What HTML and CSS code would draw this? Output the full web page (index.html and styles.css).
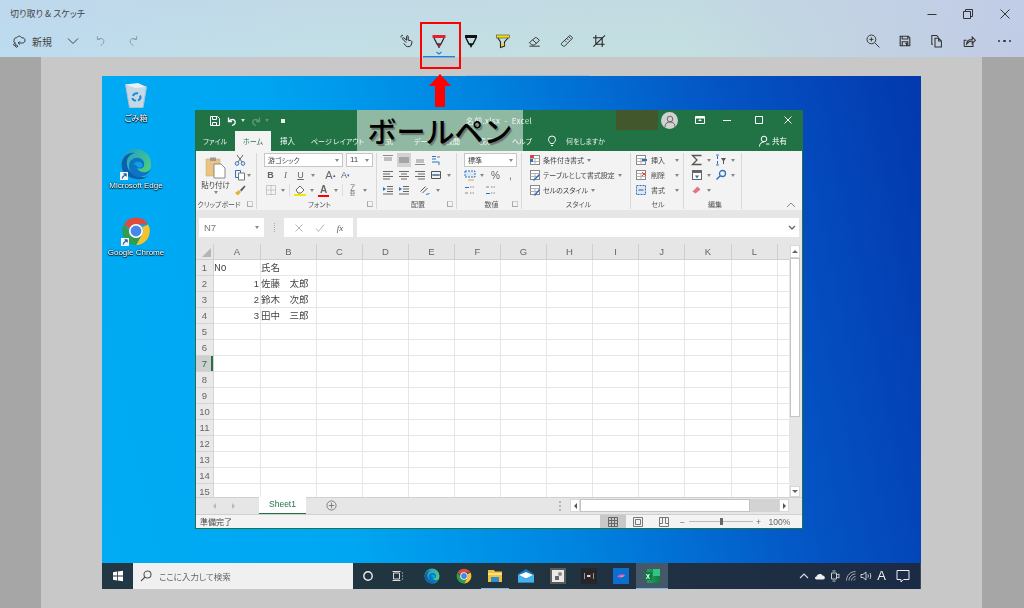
FILE: index.html
```html
<!DOCTYPE html>
<html lang="ja">
<head>
<meta charset="utf-8">
<title>切り取り &amp; スケッチ</title>
<link rel="stylesheet" href="styles.css">
</head>
<body>
<svg class="defs" aria-hidden="true">
  <defs>
    <linearGradient id="edge-g" x1="0" y1="0" x2="1" y2="1"><stop offset="0" stop-color="#1a9bd0"/><stop offset="1" stop-color="#5ad76e"/></linearGradient>
    <linearGradient id="xl-g" x1="0" y1="0" x2="1" y2="0"><stop offset="0" stop-color="#21a366"/><stop offset="1" stop-color="#107c41"/></linearGradient>
    <symbol id="edge" viewBox="0 0 32 32">
      <circle cx="16" cy="16" r="15" fill="url(#edge-g)"/>
      <path d="M1.5 17C2 8 9 4 15 5c-6 1-9 6-8 12 1 7 8 12 16 12 2 0 4-.5 5-1-3 2.500-7 4-12 3C8 30 1.500 25 1.500 17Z" fill="#0a5fb0"/>
      <path d="M9 18c0-6 5-9 10-8 4 1 6 4 5 8-1 3-5 3-7 2 1 3 5 5 9 4 2-.5 4-2 5-3-2 5-7 8-12 8-6 0-10-5-10-11Z" fill="#0c74c4"/>
      <path d="M13 17c1-3 4-4 7-3 3 1 3 4 2 5-2 1-5 .5-5-1-1-1.500-3-2-4-1Z" fill="#0ea1e4"/>
    </symbol>
    <symbol id="chrome" viewBox="0 0 32 32">
      <path d="M3 9A15 15 0 0 1 29 9H16a7 7 0 0 0-6.500 4.500Z" fill="#dd4b3e"/>
      <path d="M29 9A15 15 0 0 1 16 31l6.500-11.500A7 7 0 0 0 22.500 12Z" fill="#f6c22c"/>
      <path d="M3 9a15 15 0 0 0 13 22l6.500-11.500a7 7 0 0 1-12.500-2.500Z" fill="#2f9e4f"/>
      <circle cx="16" cy="16" r="7.500" fill="#fff"/>
      <circle cx="16" cy="16" r="5.800" fill="#4a86e8"/>
    </symbol>
    <symbol id="shortcut" viewBox="0 0 9 9">
      <rect width="9" height="9" fill="#f4f4f4"/>
      <path d="M2.500 7.500C2.500 5 3.500 4 5.500 4M4.200 2H7v2.800Z" fill="#1a5fb4" stroke="#1a5fb4"/>
    </symbol>
    <symbol id="lines-l" viewBox="0 0 12 12"><path d="M1 2.500h10M1 5h7M1 7.500h10M1 10h7" stroke="#6a6a6a" fill="none"/></symbol>
    <symbol id="lines-c" viewBox="0 0 12 12"><path d="M1 2.500h10M3 5h6M1 7.500h10M3 10h6" stroke="#6a6a6a" fill="none"/></symbol>
    <symbol id="lines-r" viewBox="0 0 12 12"><path d="M1 2.500h10M4 5h7M1 7.500h10M4 10h7" stroke="#6a6a6a" fill="none"/></symbol>
    <symbol id="lines-t" viewBox="0 0 12 12"><path d="M1 1.500h10M2 4h8M2 6h8" stroke="#8a8a8a" fill="none"/></symbol>
    <symbol id="lines-m" viewBox="0 0 12 12"><path d="M1 4h10M1 6h10M1 8h10" stroke="#777" fill="none"/></symbol>
    <symbol id="lines-b" viewBox="0 0 12 12"><path d="M2 6h8M2 8h8M1 10.500h10" stroke="#8a8a8a" fill="none"/></symbol>
    <symbol id="table-mini" viewBox="0 0 12 12"><rect x="1.500" y="1.500" width="9" height="9" fill="#fff" stroke="#888"/><path d="M1.500 4.500h9M1.500 7.500h9M6 4.500v6" stroke="#b2b2b2" fill="none"/></symbol>
  </defs>
</svg>

<div class="app">
  <header class="head">
    <div class="titlebar">
      <span class="apptitle">切り取り &amp; スケッチ</span>
      <div class="winctl">
        <button class="wbtn"><svg class="i12" viewBox="0 0 12 12"><path d="M1.500 6.500h9" stroke="#333" fill="none"/></svg></button>
        <button class="wbtn"><svg class="i12" viewBox="0 0 12 12"><path d="M1.500 3.500h7v7h-7zM3.500 3.500v-2h7v7h-2" stroke="#333" fill="none"/></svg></button>
        <button class="wbtn"><svg class="i12" viewBox="0 0 12 12"><path d="M1.500 1.500l9 9M10.500 1.500l-9 9" stroke="#333" fill="none"/></svg></button>
      </div>
    </div>
    <div class="toolbar">
      <div class="tb-left">
        <svg class="i16" viewBox="0 0 20 20" fill="none" stroke="#333" stroke-width="1.200"><path d="M6 12.500C3.500 12.500 3 10 4 9c-.5-2 1.500-3.500 3-3C8 3.500 12 3 13.500 6c2.500-.5 4.500 1.500 4 4-.5 2-2 2.500-3.500 2.500H9l2-2M9 12.500l2 2"/><circle cx="4.500" cy="14.500" r="1.300"/><circle cx="7" cy="16.500" r="1.300"/></svg>
        <span class="newlabel">新規</span>
        <svg class="i12 chev" viewBox="0 0 12 12" fill="none" stroke="#444"><path d="M1 3.500l5 5 5-5"/></svg>
        <svg class="i16 undo" viewBox="0 0 20 20" fill="none" stroke="#8b9aa3" stroke-width="1.200"><path d="M9.500 15.500c3-1.500 4.500-3.500 4-6-.5-2-3-3-5-2.500L5.500 8M5.500 4v4H9"/></svg>
        <svg class="i16 redo" viewBox="0 0 20 20" fill="none" stroke="#8b9aa3" stroke-width="1.200"><path d="M10.500 15.500c-3-1.500-4.500-3.500-4-6 .5-2 3-3 5-2.500l3 1M14.500 4v4H11"/></svg>
      </div>
      <div class="tb-center">
        <div class="tool"><svg class="i16" viewBox="0 0 20 20" fill="none" stroke="#222" stroke-width="1.200"><path d="M9 12L4.500 7.500c-1-1 .5-2 1.500-1.500l3.500 3V4.500c0-1.500 2-1.500 2 0V9l3 .5c1.500.5 2 1.500 1.500 3l-1 3c-.5 1-1 1.500-2.500 1.500h-2c-1 0-2-.5-2.500-1.500L6 13"/><path d="M2.500 5.500c-.5-1.500 1-3 2.500-2.500"/></svg></div>
        <div class="tool tool-pen"><svg class="pen" viewBox="0 0 32 30" fill="none"><rect x="9.500" y="8" width="13" height="3" fill="#e8202a"/><path d="M11 11l3 6h4l3-6" stroke="#222" stroke-width="1.200"/><path d="M14 17l2 4 2-4z" fill="#d71920" stroke="#222" stroke-width=".6"/><path d="M13.500 25l2.500 2 2.500-2" stroke="#1f82e0" stroke-width="1.200"/><rect y="29" width="32" height="1.400" fill="#1f82e0"/></svg></div>
        <div class="tool"><svg class="i20" viewBox="0 0 20 20" fill="none"><rect x="4" y="4" width="12" height="3" fill="#111"/><path d="M5 7l3 6h4l3-6" stroke="#111" stroke-width="1.400"/><path d="M8 13l2 4 2-4z" fill="#111"/></svg></div>
        <div class="tool"><svg class="i20" viewBox="0 0 20 20" fill="none"><rect x="3.500" y="4" width="13" height="3" fill="#f5d90a" stroke="#333" stroke-width=".5"/><path d="M5 7l2.500 4v5.500l4-1.500v-4L15 7" stroke="#222" stroke-width="1.100"/><path d="M8.200 12.500h3v2l-3 1z" fill="#f5d90a"/></svg></div>
        <div class="tool"><svg class="i16" viewBox="0 0 20 20" fill="none" stroke="#333" stroke-width="1.200"><path d="M3 12l7-6c.8-.6 1.500-.6 2 0l3 2.500c.5.5.5 1 0 1.500l-6 5H6zM7 8.500l5 4.500M3 16.500h13"/></svg></div>
        <div class="tool"><svg class="i16" viewBox="0 0 20 20" fill="none" stroke="#333" stroke-width="1.200"><path d="M3 13L13 3.500c.5-.5 1-.5 1.500 0l2 2c.5.5.5 1 0 1.500L7 16.500c-.5.5-1 .5-1.500 0L3 14.500c-.4-.5-.4-1 0-1.500zM7.500 9.500l2 2M10 7l2 2M12.500 5l2 2"/></svg></div>
        <div class="tool"><svg class="i16" viewBox="0 0 20 20" fill="none" stroke="#222" stroke-width="1.300"><path d="M6 2.500V14h11M2.500 6H14v11.500M3 17L17.500 3"/></svg></div>
      </div>
      <div class="tb-right">
        <div class="tool"><svg class="i16" viewBox="0 0 20 20" fill="none" stroke="#333" stroke-width="1.200"><circle cx="8" cy="8" r="5.500"/><path d="M12 12l6 6M5.500 8h5M8 5.500v5"/></svg></div>
        <div class="tool"><svg class="i16" viewBox="0 0 20 20" fill="none" stroke="#333" stroke-width="1.400"><path d="M4 4h10l2 2v10H4zM6.500 4v3.500h7V4M6.500 16v-5h7v5M10.500 13h1.500v3"/></svg></div>
        <div class="tool"><svg class="i16" viewBox="0 0 20 20" fill="none" stroke="#333" stroke-width="1.300"><path d="M5 14H3.500V3h6L12 5.500M7.500 6.500H12l3.500 3.500v7.500h-8zM12 6.500V10h3.500"/></svg></div>
        <div class="tool"><svg class="i16" viewBox="0 0 20 20" fill="none" stroke="#333" stroke-width="1.300"><path d="M4 17h11v-4M4 17V9h3M7 14c0-3.500 2.500-6 7-6V5l4 4-4 4v-3c-3 0-5 1-7 4z"/></svg></div>
        <div class="tool more"><span class="dot"></span><span class="dot"></span><span class="dot"></span></div>
      </div>
    </div>
  </header>

  <main class="canvas">
    <div class="stage">
      <section class="desktop">
        <div class="desk-area">
          <div class="desk-icons">
            <div class="dicon dicon-bin">
              <svg class="i26" viewBox="0 0 26 26"><path d="M2.500 2.500L23.500 5 20 25.500H6.500Z" fill="#c4d8e6" stroke="#a9c3d6"/><path d="M2.500 2.500L15 1l8.500 4L12 6Z" fill="#e6f1f8"/><path d="M10 14c.5-2 3-3.500 5-2.500M17 13.500c1 2 0 4-2 5M13 18.500c-2 .5-3.500-1-3.500-2.500" fill="none" stroke="#1a88d8" stroke-width="2"/></svg>
              <span class="dlabel">ごみ箱</span>
            </div>
            <div class="dicon dicon-edge">
              <span class="dglyph"><svg class="i32" viewBox="0 0 32 32"><use href="#edge"/></svg><svg class="short" viewBox="0 0 9 9"><use href="#shortcut"/></svg></span>
              <span class="dlabel">Microsoft Edge</span>
            </div>
            <div class="dicon dicon-chrome">
              <span class="dglyph"><svg class="i30" viewBox="0 0 32 32"><use href="#chrome"/></svg><svg class="short" viewBox="0 0 9 9"><use href="#shortcut"/></svg></span>
              <span class="dlabel">Google Chrome</span>
            </div>
          </div>

          <article class="excel">
            <div class="xl-title">
              <div class="qat">
                <svg class="i12" viewBox="0 0 12 12" fill="none" stroke="#fff"><path d="M1.500 1.500h7l2 2v7h-9zM3.500 1.500v3h4v-3M3.500 10.500v-3h4v3"/></svg>
                <svg class="i12 q-undo" viewBox="0 0 12 12" fill="none" stroke="#fff" stroke-width="1.300"><path d="M6 10.500c3-1 3.500-3 3-4.500C8 4 5 4 3 6M2.500 2.500V6.500H6"/></svg>
                <span class="dd dd-w"></span>
                <svg class="i12 q-redo" viewBox="0 0 12 12" fill="none" stroke="#5c9a77" stroke-width="1.300"><path d="M6 10.500c-3-1-3.500-3-3-4.500C4 4 7 4 9 6M9.500 2.500V6.500H6"/></svg>
                <span class="dd dd-dim"></span>
                <span class="q-more"></span>
              </div>
              <span class="xl-name">名前.xlsx  -  Excel</span>
              <span class="redact"></span>
              <span class="avatar"><svg class="i12" viewBox="0 0 12 12" fill="none" stroke="#666"><circle cx="6" cy="4" r="2.800"/><path d="M1 12c0-3.500 2-5 5-5s5 1.500 5 5"/></svg></span>
              <div class="xl-ctl">
                <svg class="i12" viewBox="0 0 12 12"><path d="M1.500 2.500h9v7h-9z" fill="none" stroke="#fff"/><path d="M1.500 2.500h9v2h-9zM6 5l2 2H4z" fill="#fff"/></svg>
                <svg class="i12" viewBox="0 0 12 12"><path d="M2 6.500h8" stroke="#fff"/></svg>
                <svg class="i12" viewBox="0 0 12 12"><path d="M2.500 2.500h7v7h-7z" fill="none" stroke="#fff"/></svg>
                <svg class="i12" viewBox="0 0 12 12"><path d="M2.500 2.500l7 7M9.500 2.500l-7 7" stroke="#fff"/></svg>
              </div>
            </div>
            <nav class="xl-tabs">
              <span class="tab t-file">ファイル</span>
              <span class="tab t-home">ホーム</span>
              <span class="tab t-ins">挿入</span>
              <span class="tab t-page">ページ レイアウト</span>
              <span class="tab t-form">数式</span>
              <span class="tab t-data">データ</span>
              <span class="tab t-rev">校閲</span>
              <span class="tab t-view">表示</span>
              <span class="tab t-help">ヘルプ</span>
              <svg class="i12 bulb" viewBox="0 0 12 12" fill="none" stroke="#fff"><path d="M4.500 8.500C4 7 2.500 6.500 2.500 4.500a3.500 3.500 0 0 1 7 0c0 2-1.500 2.500-2 4zM5 10.500h2"/></svg>
              <span class="tab t-tell">何をしますか</span>
              <span class="share"><svg class="i12" viewBox="0 0 12 12" fill="none" stroke="#fff"><circle cx="6" cy="4" r="2.800"/><path d="M1.500 11.500c0-3 2-4.500 4.500-4.500M8 9h3.500"/></svg>共有</span>
            </nav>
            <div class="ribbon">
              <div class="group g-clip">
                <div class="clip-body">
                  <div class="paste">
                    <svg class="i22" viewBox="0 0 22 24"><path d="M1 4h14v17H1z" fill="#e9c483" stroke="#c9a566" stroke-width=".5"/><path d="M5 2.500h6V6H5z" fill="#9a9a9a"/><path d="M9 9h7l4 4v10H9z" fill="#fff" stroke="#8a8a8a"/></svg>
                    <span class="paste-t">貼り付け</span>
                    <span class="dd"></span>
                  </div>
                  <div class="clip-side">
                    <div class="row"><span class="ic"><svg class="i12" viewBox="0 0 12 12" fill="none"><path d="M3 1l5 7M9 1L4 8" stroke="#666"/><circle cx="3" cy="9.500" r="1.800" stroke="#2b72c4"/><circle cx="9" cy="9.500" r="1.800" stroke="#2b72c4"/></svg></span></div>
                    <div class="row"><span class="ic"><svg class="i12" viewBox="0 0 12 12" fill="none" stroke="#2b72c4"><path d="M1.500 1.500h5v7h-5z"/><path d="M4.500 4h6v7h-6z" fill="#fff" stroke="#777"/></svg></span><span class="dd"></span></div>
                    <div class="row"><span class="ic"><svg class="i12" viewBox="0 0 12 12"><path d="M1 9l4-3 2 2-3 3.500z" fill="#e3b23c"/><path d="M6 6l4.500-4.500 1 1L7.500 7.500z" fill="#555"/></svg></span></div>
                  </div>
                </div>
                <div class="glabel">クリップボード<span class="launch"></span></div>
              </div>

              <div class="group g-font">
                <div class="grows">
                  <div class="row combos"><span class="combo c-font">游ゴシック<span class="dd"></span></span><span class="combo c-size">11<span class="dd"></span></span></div>
                  <div class="row">
                    <span class="ic ltr b">B</span><span class="ic ltr it">I</span><span class="ic ltr un">U</span><span class="dd cell"></span>
                    <span class="ic ltr big sp6">A<sup>▴</sup></span><span class="ic ltr small">A<sup>▾</sup></span>
                  </div>
                  <div class="row">
                    <span class="ic"><svg class="i12" viewBox="0 0 12 12"><path d="M1.500 1.500h9v9h-9zM6 1.500v9M1.500 6h9" fill="none" stroke="#a0a0a0" stroke-dasharray="1 1"/></svg></span><span class="dd cell"></span><span class="vsep"></span>
                    <span class="ic"><svg class="i12" viewBox="0 0 12 12"><path d="M2 6l4-4 4 4-3 3H4z" fill="#fff" stroke="#666"/><rect y="10" width="12" height="2" fill="#f5e500"/></svg></span><span class="dd cell"></span>
                    <span class="ic ltr color">A<i class="bar"></i></span><span class="dd cell"></span><span class="vsep"></span>
                    <span class="ic ltr furi">ア<br>亜</span><span class="dd cell"></span>
                  </div>
                </div>
                <div class="glabel">フォント<span class="launch"></span></div>
              </div>

              <div class="group g-align">
                <div class="grows">
                  <div class="row">
                    <span class="ic w16"><svg class="i12" viewBox="0 0 12 12"><use href="#lines-t"/></svg></span>
                    <span class="ic w16 sel"><svg class="i12" viewBox="0 0 12 12"><use href="#lines-m"/></svg></span>
                    <span class="ic w16"><svg class="i12" viewBox="0 0 12 12"><use href="#lines-b"/></svg></span>
                    <span class="ic w16"><svg class="i12" viewBox="0 0 12 12" fill="none"><path d="M2 2.500h4M2 5h4M2 8h7v3" stroke="#2b72c4"/><path d="M7 3h3" stroke="#777"/></svg></span>
                  </div>
                  <div class="row">
                    <span class="ic w16"><svg class="i12" viewBox="0 0 12 12"><use href="#lines-l"/></svg></span>
                    <span class="ic w16"><svg class="i12" viewBox="0 0 12 12"><use href="#lines-c"/></svg></span>
                    <span class="ic w16"><svg class="i12" viewBox="0 0 12 12"><use href="#lines-r"/></svg></span>
                    <span class="ic w16"><svg class="i12" viewBox="0 0 12 12"><path d="M1.500 2.500h9v7h-9zM1.500 6h9" fill="none" stroke="#555"/><path d="M3 6h6" stroke="#2b72c4"/></svg></span><span class="dd cell"></span>
                  </div>
                  <div class="row">
                    <span class="ic w16"><svg class="i12" viewBox="0 0 12 12"><path d="M5 2.500h6M5 5h6M5 7.500h6M1 10h10" stroke="#666" fill="none"/><path d="M4 5L1 3v4z" fill="#2b72c4"/></svg></span>
                    <span class="ic w16"><svg class="i12" viewBox="0 0 12 12"><path d="M5 2.500h6M5 5h6M5 7.500h6M1 10h10" stroke="#666" fill="none"/><path d="M1 3v4l3-2z" fill="#2b72c4"/></svg></span>
                    <span class="ic w16 sp5"><svg class="i12" viewBox="0 0 12 12" fill="none" stroke="#555"><path d="M1.500 7.500l5-5M3.500 9l5-5"/><path d="M7 10.500l3.500-1" stroke="#2b72c4"/></svg></span><span class="dd cell"></span>
                  </div>
                </div>
                <div class="glabel">配置<span class="launch"></span></div>
              </div>

              <div class="group g-num">
                <div class="grows">
                  <div class="row combos"><span class="combo c-num">標準<span class="dd"></span></span></div>
                  <div class="row">
                    <span class="ic"><svg class="i12" viewBox="0 0 12 12"><path d="M1 2h10v6H1z" fill="#dbe9f6" stroke="#2b72c4" stroke-dasharray="2 1"/><path d="M4 11h6" stroke="#e3a23c"/></svg></span><span class="dd cell"></span>
                    <span class="ic ltr pct sp2">%</span><span class="ic ltr pct">,</span>
                  </div>
                  <div class="row">
                    <span class="ic ltr nano"><svg class="i12" viewBox="0 0 12 12" fill="none"><path d="M5 3.500H1" stroke="#2b72c4"/><path d="M6 3h5M6 9h5" stroke="#888" stroke-dasharray="1.500 1"/><path d="M1 9h3" stroke="#888"/></svg></span>
                    <span class="ic ltr nano sp6"><svg class="i12" viewBox="0 0 12 12" fill="none"><path d="M1 9.500h4" stroke="#2b72c4"/><path d="M6 3h5M6 9h5" stroke="#888" stroke-dasharray="1.500 1"/><path d="M1 3h3" stroke="#888"/></svg></span>
                  </div>
                </div>
                <div class="glabel">数値<span class="launch"></span></div>
              </div>

              <div class="group g-style">
                <div class="grows">
                  <div class="row"><span class="ic"><svg class="i12" viewBox="0 0 12 12"><use href="#table-mini"/><rect x="1" y="1" width="4" height="3" fill="#d8433a"/><rect x="1" y="5" width="3" height="3" fill="#2b72c4"/></svg></span><span class="rtxt">条件付き書式</span><span class="dd"></span></div>
                  <div class="row"><span class="ic"><svg class="i12" viewBox="0 0 12 12"><use href="#table-mini"/><path d="M4 11l6-6 1 1-6 6z" fill="#2b72c4"/></svg></span><span class="rtxt">テーブルとして書式設定</span><span class="dd"></span></div>
                  <div class="row"><span class="ic"><svg class="i12" viewBox="0 0 12 12"><use href="#table-mini"/><path d="M5 11l5-6 1 1-5 6z" fill="#2b72c4"/></svg></span><span class="rtxt">セルのスタイル</span><span class="dd"></span></div>
                </div>
                <div class="glabel">スタイル</div>
              </div>

              <div class="group g-cells">
                <div class="grows">
                  <div class="row"><span class="ic"><svg class="i12" viewBox="0 0 12 12"><use href="#table-mini"/><path d="M7 5h5v2H7z" fill="#2b72c4"/></svg></span><span class="rtxt cell-t">挿入</span><span class="dd"></span></div>
                  <div class="row"><span class="ic"><svg class="i12" viewBox="0 0 12 12"><use href="#table-mini"/><path d="M7 3l4 4M11 3L7 7" stroke="#d8433a"/></svg></span><span class="rtxt cell-t">削除</span><span class="dd"></span></div>
                  <div class="row"><span class="ic"><svg class="i12" viewBox="0 0 12 12"><rect x="1.500" y="1.500" width="9" height="9" fill="#dbe9f6" stroke="#2b72c4" stroke-dasharray="2 1"/><path d="M3.500 6h5" stroke="#555"/></svg></span><span class="rtxt cell-t">書式</span><span class="dd"></span></div>
                </div>
                <div class="glabel">セル</div>
              </div>

              <div class="group g-edit">
                <div class="grows">
                  <div class="row"><span class="ic"><svg class="i12" viewBox="0 0 12 12"><path d="M10.500 1.500h-9L6 6l-4.500 4.500h9" fill="none" stroke="#555" stroke-width="1.300"/></svg></span><span class="dd cell"></span><span class="ic"><svg class="i12" viewBox="0 0 12 12"><path d="M1 1h3M1 11h3" stroke="#2b72c4"/><path d="M2.500 2v3M2.500 7v3" stroke="#2b72c4"/><path d="M6 4h5L9 7v3H8V7z" fill="#555"/></svg></span><span class="dd cell"></span></div>
                  <div class="row"><span class="ic"><svg class="i12" viewBox="0 0 12 12"><rect x="1.500" y="1.500" width="9" height="9" fill="#fff" stroke="#666"/><path d="M1.500 3h9" stroke="#666" stroke-width="2"/><path d="M6 4.500v3M4 6.500h4L6 9.500z" fill="#2b72c4"/></svg></span><span class="dd cell"></span><span class="ic"><svg class="i12" viewBox="0 0 12 12" fill="none"><circle cx="7.500" cy="4.500" r="3" stroke="#2b72c4" stroke-width="1.300"/><path d="M5 7l-3.500 3.500" stroke="#2b72c4" stroke-width="1.500"/></svg></span><span class="dd cell"></span></div>
                  <div class="row"><span class="ic"><svg class="i12" viewBox="0 0 12 12"><path d="M1.500 7.500l5-5 3 3-5 4z" fill="#e5728a"/></svg></span><span class="dd cell"></span></div>
                </div>
                <div class="glabel">編集</div>
              </div>
              <svg class="collapse" viewBox="0 0 10 6" fill="none" stroke="#888"><path d="M1 5l4-4 4 4"/></svg>
            </div>

            <div class="fbar">
              <span class="namebox">N7<span class="dd"></span></span>
              <span class="fgrip"></span>
              <span class="fbtns">
                <svg class="i10" viewBox="0 0 10 10" fill="none" stroke="#b5b5b5"><path d="M1.500 1.500l7 7M8.500 1.500l-7 7"/></svg>
                <svg class="i10" viewBox="0 0 10 10" fill="none" stroke="#b5b5b5"><path d="M1 5.500l2.500 3L9 1.500"/></svg>
                <span class="fx">fx</span>
              </span>
              <span class="finput"><svg class="fchev" viewBox="0 0 8 5" fill="none" stroke="#666" stroke-width="1.300"><path d="M1 1l3 3 3-3"/></svg></span>
            </div>

            <div class="sheet">
              <div class="gridwrap">
                <table class="cells">
                  <colgroup><col class="c0"><col class="ca"><col class="cb"><col class="cn" span="8"><col class="ck"><col class="cn"><col class="cz"></colgroup>
                  <thead><tr><th class="corner"><i></i></th><th>A</th><th>B</th><th>C</th><th>D</th><th>E</th><th>F</th><th>G</th><th>H</th><th>I</th><th>J</th><th>K</th><th>L</th><th></th></tr></thead>
                  <tbody>
                    <tr><th>1</th><td>No</td><td>氏名</td><td></td><td></td><td></td><td></td><td></td><td></td><td></td><td></td><td></td><td></td><td></td></tr>
                    <tr><th>2</th><td class="num">1</td><td>佐藤　太郎</td><td></td><td></td><td></td><td></td><td></td><td></td><td></td><td></td><td></td><td></td><td></td></tr>
                    <tr><th>3</th><td class="num">2</td><td>鈴木　次郎</td><td></td><td></td><td></td><td></td><td></td><td></td><td></td><td></td><td></td><td></td><td></td></tr>
                    <tr><th>4</th><td class="num">3</td><td>田中　三郎</td><td></td><td></td><td></td><td></td><td></td><td></td><td></td><td></td><td></td><td></td><td></td></tr>
                    <tr><th>5</th><td></td><td></td><td></td><td></td><td></td><td></td><td></td><td></td><td></td><td></td><td></td><td></td><td></td></tr>
                    <tr><th>6</th><td></td><td></td><td></td><td></td><td></td><td></td><td></td><td></td><td></td><td></td><td></td><td></td><td></td></tr>
                    <tr><th class="cur">7</th><td></td><td></td><td></td><td></td><td></td><td></td><td></td><td></td><td></td><td></td><td></td><td></td><td></td></tr>
                    <tr><th>8</th><td></td><td></td><td></td><td></td><td></td><td></td><td></td><td></td><td></td><td></td><td></td><td></td><td></td></tr>
                    <tr><th>9</th><td></td><td></td><td></td><td></td><td></td><td></td><td></td><td></td><td></td><td></td><td></td><td></td><td></td></tr>
                    <tr><th>10</th><td></td><td></td><td></td><td></td><td></td><td></td><td></td><td></td><td></td><td></td><td></td><td></td><td></td></tr>
                    <tr><th>11</th><td></td><td></td><td></td><td></td><td></td><td></td><td></td><td></td><td></td><td></td><td></td><td></td><td></td></tr>
                    <tr><th>12</th><td></td><td></td><td></td><td></td><td></td><td></td><td></td><td></td><td></td><td></td><td></td><td></td><td></td></tr>
                    <tr><th>13</th><td></td><td></td><td></td><td></td><td></td><td></td><td></td><td></td><td></td><td></td><td></td><td></td><td></td></tr>
                    <tr><th>14</th><td></td><td></td><td></td><td></td><td></td><td></td><td></td><td></td><td></td><td></td><td></td><td></td><td></td></tr>
                    <tr class="lastrow"><th>15</th><td></td><td></td><td></td><td></td><td></td><td></td><td></td><td></td><td></td><td></td><td></td><td></td><td></td></tr>
                  </tbody>
                </table>
              </div>
              <div class="vscroll">
                <span class="sbtn sbtn-up"><i class="tri-up"></i></span>
                <span class="vthumb"></span>
                <span class="sbtn sbtn-dn"><i class="tri-dn"></i></span>
              </div>
            </div>

            <div class="sheetbar">
              <span class="nav-arrows"><i class="tri-l"></i><i class="tri-r"></i></span>
              <span class="sheettab">Sheet1</span>
              <svg class="addsheet" viewBox="0 0 12 12" fill="none" stroke="#777"><circle cx="6" cy="6" r="5"/><path d="M6 3v6M3 6h6"/></svg>
              <span class="hgrip"></span>
              <div class="hscroll">
                <span class="hbtn"><i class="tri-l dark"></i></span>
                <span class="hthumb"></span>
                <span class="hbtn"><i class="tri-r dark"></i></span>
              </div>
            </div>

            <footer class="statusbar">
              <span class="ready">準備完了</span>
              <div class="views">
                <span class="view sel"><svg class="i10" viewBox="0 0 10 10" fill="none" stroke="#666"><path d="M.5.500h9v9h-9zM3.500.500v9M6.500.500v9M.5 3.500h9M.5 6.500h9"/></svg></span>
                <span class="view"><svg class="i10" viewBox="0 0 10 10" fill="none" stroke="#777"><path d="M.5.500h9v9h-9zM2.500 2.500h5v5h-5z"/></svg></span>
                <span class="view"><svg class="i10" viewBox="0 0 10 10" fill="none" stroke="#777"><path d="M.5.500h9v9h-9zM.5 6.500h3v-6M6.500.500v6h3"/></svg></span>
              </div>
              <div class="zoomer"><span class="zs">−</span><span class="ztrack"><i></i></span><span class="zs">+</span><span class="zpct">100%</span></div>
            </footer>
          </article>
        </div>

        <div class="taskbar">
          <span class="start"><svg class="i12" viewBox="0 0 12 12" fill="#fff"><path d="M1 2.200l4-.6V5.600H1zM5.800 1.500L11 .8v4.800H5.800zM1 6.400h4v4l-4-.6zM5.800 6.400H11v4.800l-5.200-.7z"/></svg></span>
          <span class="search"><svg class="i12" viewBox="0 0 12 12" fill="none" stroke="#555" stroke-width="1.100"><circle cx="7.500" cy="4.500" r="3.500"/><path d="M5 7l-4 4"/></svg><span>ここに入力して検索</span></span>
          <span class="tk tk-sys"><svg class="i12" viewBox="0 0 12 12" fill="none" stroke="#eee" stroke-width="1.400"><circle cx="6" cy="6" r="4.200"/></svg></span>
          <span class="tk tk-sys tk-view"><svg class="i12" viewBox="0 0 12 12" fill="none" stroke="#ddd"><path d="M1.500 3h6v6h-6zM.5 1.500h8M.5 10.500h8M10.500 2.500v1M10.500 5.500v1M10.500 8.500v1"/></svg></span>
          <span class="tk"><svg class="i16" viewBox="0 0 32 32"><use href="#edge"/></svg></span>
          <span class="tk"><svg class="i16" viewBox="0 0 32 32"><use href="#chrome"/></svg></span>
          <span class="tk open"><svg class="i16" viewBox="0 0 16 16"><path d="M1 2h6l1 1.500h7V14H1z" fill="#f3c03a"/><path d="M1 5h14v2H1z" fill="#fde08a"/><rect x="4" y="9" width="8" height="5" fill="#2a8fd8"/></svg></span>
          <span class="tk"><svg class="i16" viewBox="0 0 16 16"><path d="M0 6l8-5 8 5v8.500H0z" fill="#0f78c8"/><path d="M0 6.500l8 4.500 8-4.500v8H0z" fill="#45b2ec"/><path d="M1 7l7-3 7 3-7 3.500z" fill="#fff"/></svg></span>
          <span class="tk"><svg class="i16" viewBox="0 0 16 16"><rect width="16" height="16" fill="#5c5c5c"/><rect x="2" y="2" width="12" height="12" fill="#e9e9e9"/><path d="M5 8h4v4H5z" fill="#666"/><circle cx="10" cy="6" r="2" fill="#888"/></svg></span>
          <span class="tk"><svg class="i16" viewBox="0 0 16 16" fill="none"><rect width="16" height="16" fill="#26252a"/><path d="M3.500 5v6M12.500 5v6" stroke="#999"/><path d="M6 8h4" stroke="#d8d8d8" stroke-width="2"/><path d="M9.500 6.500v3" stroke="#c04040"/></svg></span>
          <span class="tk"><svg class="i16" viewBox="0 0 16 16"><rect width="16" height="16" fill="#0c6fd0"/><path d="M4 9c2-3 5-3.500 8-2-2 0-3 1-4 3-1-1-2-1-4-1z" fill="#d25cd0"/><path d="M7 9c1-1 3-2 5-2l-2 2z" fill="#f0a040"/></svg></span>
          <span class="tk open xl"><svg class="i16" viewBox="0 0 16 16"><rect x="3" y="1" width="13" height="14" rx="1" fill="url(#xl-g)"/><path d="M9 1h7v7H9z" fill="#33c481"/><rect y="4" width="8" height="8" fill="#107c41"/><text x="4" y="10.500" class="xl-x">X</text></svg></span>
          <div class="tray">
            <svg class="tr" viewBox="0 0 12 12" fill="none" stroke="#ddd" stroke-width="1.100"><path d="M2 8l4-4 4 4"/></svg>
            <svg class="tr" viewBox="0 0 12 12" fill="#eee"><path d="M2.500 9.500C.5 9.500.5 6.500 2.500 6.500 3 4 7 3 8.500 5.500c2.500-.5 3.500 4 .5 4z"/></svg>
            <svg class="tr" viewBox="0 0 12 12" fill="none" stroke="#ccc"><path d="M2.500 3h5v6h-5zM7.500 5l2.500-1v4l-2.500-1M3.500 1h3M3.500 11h3"/></svg>
            <svg class="tr" viewBox="0 0 12 12" fill="none" stroke="#aaa"><path d="M1.500 10.500c0-5 4-9 9-9M4 10.500c0-3.500 3-6.500 6.500-6.500M6.500 10.500c0-2 2-4 4-4M9 10.500c0-.5.500-1.500 1.500-1.500"/></svg>
            <svg class="tr" viewBox="0 0 12 12" fill="none" stroke="#ccc"><path d="M1 4.500h2L6 2v8L3 7.500H1zM8 4.500c.5 1 .5 2 0 3M10 3c1 2 1 4 0 6"/></svg>
            <span class="ime">A</span>
            <svg class="tr note" viewBox="0 0 14 14" fill="none" stroke="#eee"><path d="M1 1.500h12v9H7.500L5 13v-2.500H1z"/></svg>
          </div>
        </div>
      </section>
    </div>
  </main>

  <div class="pick-box"></div>
  <svg class="pick-arrow" viewBox="0 0 22 33"><path d="M11 0l11 12h-6v21H6V12H0z" fill="#f00"/></svg>
  <div class="callout">ボールペン</div>
</div>
</body>
</html>
```

FILE: styles.css
```css
* { box-sizing: border-box; }
html, body { margin: 0; height: 100%; overflow: hidden; }
body { font-family: "Noto Sans CJK JP", "Noto Sans", sans-serif; font-feature-settings: "palt"; color: #333; }
.defs { position: absolute; width: 0; height: 0; }
svg { display: block; flex: none; overflow: visible; }
button { border: 0; padding: 0; background: none; display: flex; align-items: center; justify-content: center; }
.i10 { width: 10px; height: 10px; }
.i12 { width: 12px; height: 12px; }
.i16 { width: 16px; height: 16px; }
.i20 { width: 20px; height: 20px; }
.i22 { width: 22px; height: 24px; }
.i26 { width: 26px; height: 26px; }
.i30 { width: 30px; height: 30px; }
.i32 { width: 32px; height: 32px; }

.app { position: relative; width: 1024px; height: 608px; display: flex; flex-direction: column; }

/* snip & sketch chrome */
.head { height: 57px; flex: none; background: linear-gradient(90deg, #bddcf0 0%, #c2dfe6 30%, #c3e0df 66%, #c2d2e2 84%, #c1cbe6 100%); position: relative; }
.head::before { content: ""; position: absolute; inset: 0; background: linear-gradient(180deg, rgba(193,208,232,.35) 0%, rgba(193,208,232,0) 100%); }
.titlebar, .toolbar { position: relative; }
.titlebar { height: 27px; display: flex; align-items: center; justify-content: space-between; padding-left: 10px; }
.apptitle { font-size: 9px; color: #444; }
.winctl { display: flex; padding-right: 1px; }
.wbtn { width: 36.500px; height: 27px; }
.toolbar { height: 30px; display: grid; grid-template-columns: 391px 224px 1fr; }
.tb-left { display: flex; align-items: center; padding: 0 0 2px 11px; }
.newlabel { font-size: 10px; margin-left: 5px; width: 35px; color: #444; }
.tb-center, .tb-right { display: flex; }
.tb-right { justify-content: flex-end; }
.tool { width: 32px; height: 30px; display: flex; align-items: center; justify-content: center; padding-bottom: 2px; }
.tool-pen { padding-bottom: 0; align-items: flex-start; }
.pen { width: 32px; height: 30px; }
.undo { margin-left: 14px; }
.redo { margin-left: 16px; }
.more { width: 39px; gap: 3px; }
.dot { width: 2.500px; height: 2.500px; border-radius: 50%; background: #333; }

/* canvas */
.canvas { flex: 1; background: #a6a6a6; padding: 0 42px 0 41px; min-height: 0; }
.stage { height: 100%; background: #c8c8c8; padding: 19px 61px; }
.desktop { position: relative; height: 513px; display: flex; flex-direction: column; background: linear-gradient(78deg, #00acf4 0%, #00a6f2 28%, #0084e0 52%, #0454c4 78%, #0338ae 100%); filter: blur(.35px); }
.desktop::before { content: ""; position: absolute; left: 364px; width: 123px; top: -1px; height: 1px; background: #a3bddb; }
.desk-area { flex: 1; position: relative; min-height: 0; }

/* desktop icons */
.desk-icons { display: flex; flex-direction: column; width: 68px; padding-top: 6px; }
.dicon { display: flex; flex-direction: column; align-items: center; }
.dicon-edge { margin-top: 24px; }
.dicon-chrome { margin-top: 25px; }
.dglyph { position: relative; display: block; }
.short { position: absolute; left: 0; bottom: 0; width: 8px; height: 8px; }
.dlabel { font-family: "Liberation Sans", "Noto Sans CJK JP", sans-serif; font-size: 8px; line-height: 10px; color: #fff; white-space: nowrap; text-shadow: 0 0 2px #000, 0 1px 1px #000; margin-top: 1px; }
.dicon-bin .dlabel { margin-top: 6px; }
.dicon-chrome .dlabel { margin-top: 2px; }

/* excel window (a window on the desktop) */
.excel { position: absolute; left: 93px; top: 34px; width: 608px; height: 419px; display: flex; flex-direction: column; border: 1px solid #217346; border-top: 0; background: #fff; font-size: 7px; color: #444; }
.xl-title { height: 21px; flex: none; background: #217346; display: flex; align-items: center; color: #fff; position: relative; padding-left: 13px; }
.qat { display: flex; align-items: center; width: 95px; }
.q-undo { margin-left: 5px; }
.dd { display: inline-block; flex: none; width: 0; height: 0; border-style: solid; border-width: 3px 2.500px 0; border-color: #888 transparent transparent; }
.dd-w { border-top-color: #cfe3d6; margin-left: 3px; }
.dd-dim { border-top-color: #5c9a77; margin-left: 3px; }
.q-redo { margin-left: 5px; }
.q-more { width: 4px; height: 4px; margin-left: 12px; background: #e8f0ea; }
.xl-name { position: absolute; left: 270px; font-size: 8px; letter-spacing: .3px; color: #dfeee5; white-space: pre; top: 5px; }
.redact { position: absolute; left: 420px; top: 0; width: 42px; height: 20px; background: #42582c; }
.avatar { position: absolute; left: 465px; top: 2px; width: 17px; height: 17px; border-radius: 50%; background: #d2d2d2; display: flex; align-items: center; justify-content: center; overflow: hidden; }
.xl-ctl { position: absolute; right: 8px; top: 4px; display: flex; }
.xl-ctl svg + svg { margin-left: 15px; }
.xl-ctl svg:nth-child(3) { margin-left: 20px; }
.xl-ctl svg:nth-child(4) { margin-left: 17px; }
.xl-tabs { height: 20px; flex: none; background: #217346; display: flex; align-items: center; color: #fff; position: relative; padding-left: 7px; }
.tab { font-size: 7px; line-height: 20px; color: #eef5f0; white-space: nowrap; }
.t-file { width: 32px; }
.t-home { width: 36px; height: 20px; background: #f3f3f3; color: #217346; text-align: center; margin-right: 9px; }
.t-ins { width: 31px; font-size: 7.500px; }
.t-page { width: 68px; }
.t-form { width: 35px; }
.t-data { width: 32px; }
.t-rev { width: 33px; }
.t-view { width: 33px; }
.t-help { width: 34px; }
.bulb { margin-right: 8px; }
.t-tell { color: #dfeee5; }
.share { position: absolute; right: 15px; top: 4px; display: flex; align-items: center; gap: 2px; font-size: 7.500px; line-height: 12px; }

.ribbon { height: 59px; flex: none; background: #f3f3f3; display: flex; position: relative; }
.group { display: flex; flex-direction: column; border-right: 1px solid #d8d8d8; margin: 2px 0 1px; flex: none; position: relative; }
.grows { flex: 1; display: flex; flex-direction: column; gap: 1px; }
.row { height: 14px; display: flex; align-items: center; flex: none; }
.glabel { height: 10px; font-size: 7px; line-height: 10px; text-align: center; color: #555; margin-top: 2px; flex: none; }
.launch { position: absolute; right: 3px; bottom: 2px; width: 6px; height: 6px; border-left: 1px solid #aaa; border-bottom: 1px solid #aaa; border-top: 1px solid #ccc; border-right: 1px solid #ccc; }
.ic { width: 15px; height: 14px; display: flex; align-items: center; justify-content: center; flex: none; }
.w16 { width: 16px; }
.sel { background: #d2d2d2; }
.g-align .row > .w16.sel { width: 14px; margin: 0 1px; }
.cell { margin: 0 2.500px; }
.vsep { width: 1px; height: 12px; background: #ddd; margin: 0 2px; }
.ltr { font-family: "Liberation Sans", sans-serif; font-size: 9px; color: #666; }
.b { font-weight: 700; }
.it { font-style: italic; font-family: "Liberation Serif", serif; }
.un { text-decoration: underline; }
.big { font-size: 11px; }
.small { font-size: 9px; }
.ltr sup { font-size: 5px; color: #2b72c4; line-height: 0; }
.sp6 { margin-left: 6px; }
.sp5 { margin-left: 5px; }
.sp2 { margin-left: 2px; }
.color { position: relative; font-weight: 700; font-size: 10px; padding-bottom: 2px; }
.bar { position: absolute; left: 2px; right: 2px; bottom: 0; height: 2px; background: #f00; }
.furi { font-size: 5.500px; line-height: 6px; font-family: "Noto Sans CJK JP", sans-serif; text-align: center; }
.pct { font-size: 10px; }
.combos { gap: 3px; }
.combo { height: 14px; background: #fff; border: 1px solid #c6c6c6; font-size: 7px; line-height: 12px; padding: 0 3px; display: flex; align-items: center; justify-content: space-between; color: #444; }
.c-font { width: 79px; }
.c-size { width: 27px; font-family: "Liberation Sans", sans-serif; font-size: 8px; }
.c-num { width: 53px; }

.g-clip { width: 61px; padding-left: 0; }
.g-clip .glabel { padding-right: 14px; }
.clip-body { flex: 1; display: flex; padding-left: 3px; }
.paste { width: 33px; display: flex; flex-direction: column; align-items: center; padding-top: 2px; }
.paste-t { font-size: 7.500px; line-height: 9px; white-space: nowrap; margin-top: 1px; color: #444; }
.paste .dd { margin-top: 2px; }
.clip-side { padding-left: 0; display: flex; flex-direction: column; gap: 1px; }
.g-font { width: 120px; padding-left: 6px; }
.g-font .combos { padding-left: 1px; }
.g-align { width: 80px; padding-left: 3px; }
.g-num { width: 65px; padding-left: 5px; }
.g-num .combos { padding-left: 2px; }
.g-style { width: 109px; padding-left: 5px; }
.g-cells { width: 53px; padding-left: 2px; }
.g-edit { width: 58px; padding-left: 5px; }
.rtxt { font-size: 7px; line-height: 14px; margin: 0 3px 0 1px; white-space: nowrap; color: #444; }
.cell-t { width: 24px; margin: 0 0 0 3px; }
.collapse { position: absolute; right: 6px; bottom: 2px; width: 10px; height: 6px; }

.fbar { height: 34px; flex: none; background: #e6e6e6; display: flex; padding: 8px 3px 7px; }
.namebox { width: 65px; background: #fff; display: flex; align-items: center; justify-content: space-between; padding: 0 5px; font-family: "Liberation Sans", sans-serif; font-size: 9.500px; color: #777; }
.fgrip { width: 20px; position: relative; }
.fgrip::after { content: ""; position: absolute; left: 10px; top: 5px; bottom: 5px; border-left: 1px dotted #aaa; }
.fbtns { width: 69px; background: #fff; display: flex; align-items: center; justify-content: space-around; padding: 0 4px; }
.fx { font-family: "Liberation Serif", serif; font-style: italic; font-size: 9px; color: #555; }
.finput { flex: 1; margin-left: 4px; background: #fff; display: flex; align-items: center; justify-content: flex-end; padding-right: 3px; }
.fchev { width: 8px; height: 5px; }

.sheet { flex: 1; display: flex; min-height: 0; background: #fff; overflow: hidden; }
.gridwrap { width: 593px; overflow: hidden; }
.cells { border-collapse: separate; border-spacing: 0; table-layout: fixed; width: 593px; font-size: 9.500px; color: #444; }
.c0 { width: 18px; }
.ca { width: 47px; }
.cb { width: 56px; }
.cn { width: 46px; }
.ck { width: 47px; }
.cz { width: 12px; }
.cells tr { height: 16px; }
.cells td { padding: 0 1px 0 0; border-right: 1px solid #e6e6e6; border-bottom: 1px solid #e6e6e6; line-height: 15px; height: 16px; white-space: nowrap; overflow: hidden; font-feature-settings: normal; }
.cells td.num { text-align: right; font-family: "Liberation Sans", sans-serif; }
.cells th { font-weight: 400; background: #e6e6e6; color: #666; font-family: "Liberation Sans", sans-serif; font-size: 9.500px; padding: 0; border-right: 1px solid #cfcfcf; border-bottom: 1px solid #cfcfcf; line-height: 15px; height: 16px; }
.cells tbody th { background: #e9e9e9; border-color: #d4d4d4; }
.cells th.cur { background: #cfcfcf; color: #217346; box-shadow: inset -2px 0 #217346; }
.corner { position: relative; }
.corner i { position: absolute; right: 2px; bottom: 2px; border-style: solid; border-width: 0 0 9px 9px; border-color: transparent transparent #b5b5b5; }
.vscroll { flex: 1; background: #e6e6e6; display: flex; flex-direction: column; align-items: center; padding: 1px 2px 0 1px; }
.sbtn { width: 100%; height: 13px; flex: none; background: #fff; border: 1px solid #d8d8d8; display: flex; align-items: center; justify-content: center; }
.vthumb { width: 100%; height: 159px; background: #fff; border: 1px solid #c4c4c4; flex: none; }
.sbtn-dn { margin-top: auto; height: 11px; }
.tri-up, .tri-dn, .tri-l, .tri-r { display: block; width: 0; height: 0; border-style: solid; }
.tri-up { border-width: 0 3px 3px; border-color: transparent transparent #666; }
.tri-dn { border-width: 3px 3px 0; border-color: #666 transparent transparent; }
.tri-l { border-width: 3px 3px 3px 0; border-color: transparent #b9b9b9 transparent transparent; }
.tri-r { border-width: 3px 0 3px 3px; border-color: transparent transparent transparent #b9b9b9; }
.tri-l.dark { border-right-color: #555; }
.tri-r.dark { border-left-color: #555; }

.sheetbar { height: 17px; flex: none; background: #e6e6e6; display: flex; align-items: stretch; border-top: 1px solid #d0d0d0; }
.nav-arrows { width: 63px; padding: 0 0 0 17px; display: flex; align-items: center; gap: 16px; }
.sheettab { width: 47px; background: #fff; color: #217346; font-family: "Liberation Sans", sans-serif; font-size: 8.500px; line-height: 15px; text-align: center; border-bottom: 1px solid #217346; margin-top: -1px; height: 17px; }
.addsheet { width: 11px; height: 11px; margin: 2px 0 0 20px; }
.hgrip { width: 2px; margin: 3px 0 3px 222px; border-left: 2px dotted #b5b5b5; }
.hscroll { width: 219px; margin: 1px 0 2px 9px; display: flex; background: #d3d3d3; }
.hbtn { width: 10px; background: #fff; display: flex; align-items: center; justify-content: center; flex: none; border: 1px solid #d8d8d8; }
.hbtn:last-child { margin-left: auto; }
.hthumb { width: 170px; background: #fff; border: 1px solid #c4c4c4; }

.statusbar { height: 14px; flex: none; background: #f3f3f3; border-top: 1px solid #d0d0d0; display: flex; align-items: stretch; padding-left: 4px; }
.ready { font-size: 8px; line-height: 13px; width: 400px; color: #444; }
.views { display: flex; }
.view { width: 25.500px; display: flex; align-items: center; justify-content: center; }
.view.sel { background: #c8c8c8; }
.zoomer { display: flex; align-items: center; margin-left: 1px; font-family: "Liberation Sans", sans-serif; font-size: 8.500px; color: #666; }
.zs { width: 10px; text-align: center; }
.ztrack { width: 64px; height: 1px; background: #bbb; position: relative; margin: 0 1px; }
.ztrack i { position: absolute; left: 31px; top: -3px; width: 3px; height: 7px; background: #666; }
.zpct { margin-left: 5px; }

/* taskbar */
.taskbar { height: 26px; flex: none; background: linear-gradient(90deg, #213844 0%, #21343f 50%, #1b2b46 100%); display: flex; align-items: stretch; }
.start { width: 31px; display: flex; align-items: center; justify-content: center; }
.search { width: 220px; background: #f0f0f0; display: flex; align-items: center; gap: 7px; padding-left: 7px; font-size: 8.500px; color: #666; }
.tk { width: 31.400px; display: flex; align-items: center; justify-content: center; position: relative; flex: none; }
.tk-sys { width: 30px; }
.tk-view { margin-right: 3.600px; }
.open::after { content: ""; position: absolute; left: 2px; right: 2px; bottom: 0; height: 1.500px; background: #7fb8e6; }
.xl { background: #44586a; }
.xl::after { left: 0; right: 0; }
.xl-x { font-family: "Liberation Sans", sans-serif; font-size: 6.500px; font-weight: 700; fill: #fff; text-anchor: middle; }
.tray { margin-left: auto; display: flex; align-items: center; padding-right: 10px; border-right: 1px solid #3a4a62; gap: 3.500px; }
.tr { width: 12px; height: 12px; }
.ime { width: 12px; text-align: center; font-family: "Liberation Sans", sans-serif; font-size: 13px; line-height: 14px; color: #eee; }
.note { width: 14px; height: 14px; margin-left: 5px; }

/* annotations over the screenshot */
.pick-box { position: absolute; left: 420px; top: 22px; width: 41px; height: 47px; border: 2.500px solid #f00; }
.pick-arrow { position: absolute; left: 429px; top: 74px; width: 22px; height: 33px; }
.callout { position: absolute; left: 357px; top: 110px; width: 166px; height: 41px; background: rgba(255,255,255,.5); font-size: 29px; font-weight: 500; line-height: 40px; text-align: center; color: #000; font-feature-settings: normal; text-shadow: 1.500px 1.500px 1px rgba(90,90,90,.7); white-space: nowrap; }
```
